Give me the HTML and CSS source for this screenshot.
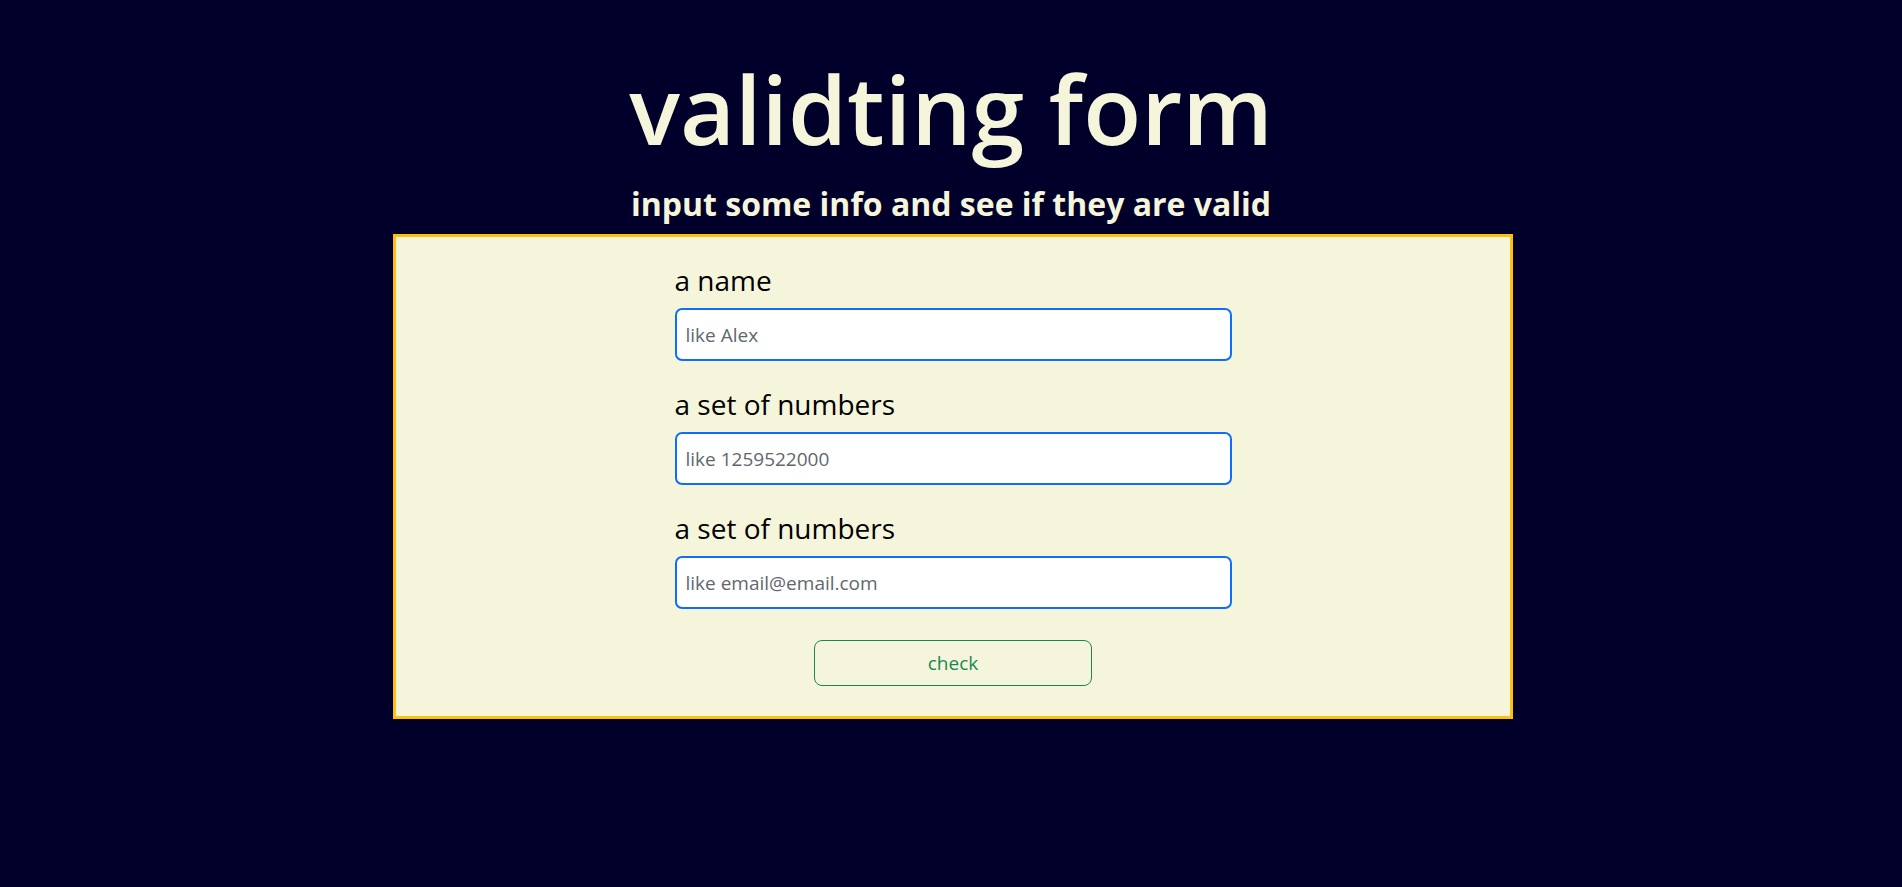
FILE: index.html
```html
<!DOCTYPE html>
<html lang="en">
  <head>
    <meta charset="UTF-8" />
    <meta name="viewport" content="width=device-width, initial-scale=1.0" />
    <title>validting form</title>
    <link rel="stylesheet" href="styles.css">
  </head>
  <body>
    <div class="header">
      <h1>validting form</h1>
      <h2>input some info and see if they are valid</h2>
    </div>

    <div class="form-box">
      <form class="form" onsubmit="return false">
        <div class="field">
          <label for="name">a name</label>
          <input type="text" id="name" placeholder="like Alex" />
        </div>

        <div class="field">
          <label for="number">a set of numbers</label>
          <input type="text" id="number" placeholder="like 1259522000" />
        </div>

        <div class="field">
          <label for="email">a set of numbers</label>
          <input type="text" id="email" placeholder="like email@email.com" />
        </div>

        <div class="actions">
          <button type="submit" class="check-btn">check</button>
        </div>
      </form>
    </div>
  </body>
</html>
```

FILE: styles.css
```css
* {
  margin: 0;
  padding: 0;
  box-sizing: border-box;
}

body {
  font-family: "Open Sans", "Noto Sans", sans-serif;
  background: #00002b;
  min-height: 100vh;
  padding-top: 51px;
}

.header {
  text-align: center;
  color: #f5f5dc;
}

.header h1 {
  font-size: 95px;
  font-weight: 600;
  line-height: 114px;
  margin-bottom: 19px;
}

.header h2 {
  font-size: 32px;
  font-weight: 700;
  line-height: 40px;
  margin-bottom: 10px;
}

.form-box {
  width: 1120px;
  margin-left: calc(50% - 558px);
  background: #f5f5dc;
  border: 3px solid #ffc107;
  padding: 26px 0 30px;
}

.form {
  width: 50%;
  margin: 0 auto;
}

.field {
  margin-bottom: 26px;
}

.field label {
  display: block;
  font-size: 28px;
  line-height: 34px;
  color: #000;
  margin-bottom: 11px;
}

.field input {
  display: block;
  width: 100%;
  height: 53px;
  padding: 0 9px;
  border: 2px solid #0d6efd;
  border-radius: 7px;
  background: white;
  font-family: inherit;
  font-size: 19px;
  color: #212529;
  outline: none;
}

.field input::placeholder {
  color: #5f676e;
}

.actions {
  display: flex;
  justify-content: center;
  margin-top: 31px;
}

.field:last-of-type {
  margin-bottom: 0;
}

.check-btn {
  width: 50%;
  height: 46px;
  background: transparent;
  border: 1px solid #198754;
  border-radius: 8px;
  color: #198754;
  font-family: inherit;
  font-size: 19px;
  cursor: pointer;
}

.check-btn:hover {
  background: #198754;
  color: white;
}
```
